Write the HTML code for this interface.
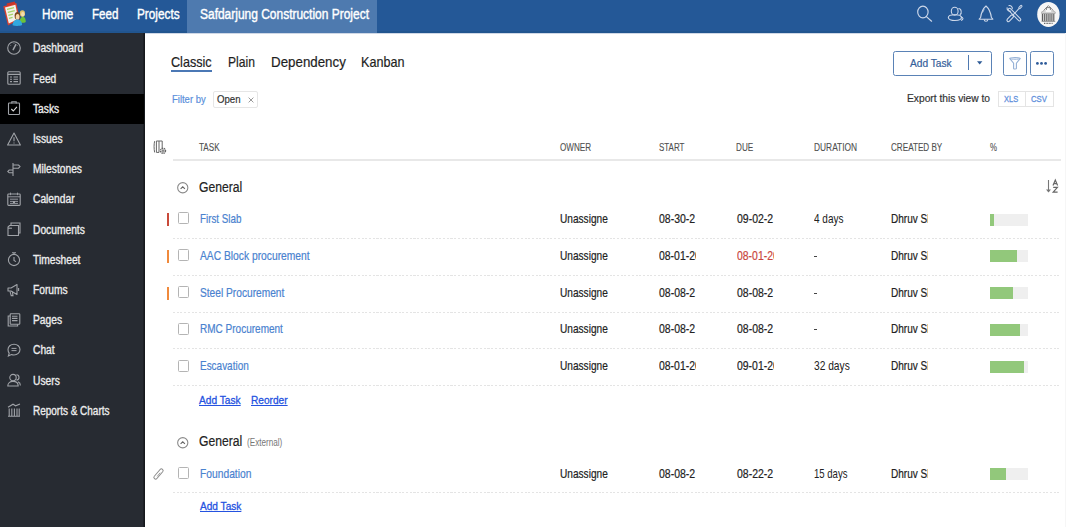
<!DOCTYPE html>
<html><head><meta charset="utf-8"><style>
html,body{margin:0;padding:0;width:1070px;height:527px;overflow:hidden;background:#fff;}
body{position:relative;font-family:"Liberation Sans",sans-serif;}
.t{position:absolute;white-space:nowrap;transform-origin:0 0;}
.c{position:absolute;}
svg.c{overflow:visible}
</style></head><body>
<div class="c" style="left:0px;top:0px;width:1066px;height:33px;background:#245897"></div>
<div class="c" style="left:0px;top:31px;width:1066px;height:2px;background:#21558f"></div>
<div class="c" style="left:187px;top:0px;width:190px;height:33px;background:#4e7aaf"></div>
<div class="c" style="left:145px;top:33px;width:921px;height:1px;background:#cfd8e6"></div>
<div class="t" style="left:41.60px;top:5px;font-size:14.0px;line-height:18px;color:#fff;transform:scaleX(0.8373);-webkit-text-stroke:0.4px #fff;">Home</div>
<div class="t" style="left:91.70px;top:5px;font-size:14.0px;line-height:18px;color:#fff;transform:scaleX(0.8271);-webkit-text-stroke:0.4px #fff;">Feed</div>
<div class="t" style="left:136.50px;top:5px;font-size:14.0px;line-height:18px;color:#fff;transform:scaleX(0.8429);-webkit-text-stroke:0.4px #fff;">Projects</div>
<div class="t" style="left:200.20px;top:5px;font-size:14.0px;line-height:18px;color:#fff;transform:scaleX(0.8549);-webkit-text-stroke:0.4px #fff;">Safdarjung Construction Project</div>
<svg class="c" style="left:0px;top:0px" width="32" height="32" viewBox="0 0 32 32">
<path d="M3.3 6.3L16.4 3l3.2 16.5L8 25.6z" fill="#d9402f"/>
<path d="M5 7.4L15.4 4.8l2.8 14.2L8.8 23.6z" fill="#f3f1ea"/>
<path d="M6.6 3.6l8.2-2 .6 2.4-8.2 2z" fill="#c8362a"/>
<path d="M7 9.4l7-1.8M7.8 12.4l7-1.8M8.4 15.4l4.6-1.2M9 18.4l3.6-1" stroke="#a6d46a" stroke-width="1.3"/>
<ellipse cx="22.4" cy="13.6" rx="2.6" ry="3.3" fill="#e4c36a"/>
<ellipse cx="22.8" cy="14.3" rx="1.7" ry="2.3" fill="#f4dcb0"/>
<path d="M19.6 22.6c0-3.2 1.4-5.8 3.4-5.8s2.8 2.4 2.8 5.2c-1.6.9-4.4 1.1-6.2.6z" fill="#6cc23a"/>
<ellipse cx="17.4" cy="15.8" rx="2.8" ry="3.9" fill="#7b4a1c"/>
<ellipse cx="17.6" cy="16.8" rx="1.9" ry="2.9" fill="#f6d5a8"/>
<path d="M12.6 25.2c0-3.4 2-5.8 4.9-5.8s4.6 2.4 4.6 5.6c-2.4 1.2-7 1.2-9.5.2z" fill="#32a8e0"/>
</svg>
<svg class="c" style="left:914px;top:3px" width="20" height="20" viewBox="0 0 20 20"><ellipse cx="8.9" cy="9" rx="5.2" ry="5.9" fill="none" stroke="#cdd8ea" stroke-width="1.15"/><path d="M12.4 13.6l5.2 4.6" stroke="#cdd8ea" stroke-width="1.2" stroke-linecap="round"/></svg>
<svg class="c" style="left:946px;top:4px" width="20" height="20" viewBox="0 0 20 20"><ellipse cx="8.7" cy="7.2" rx="3.4" ry="3.9" fill="none" stroke="#cdd8ea" stroke-width="1.1"/><ellipse cx="8.9" cy="13.6" rx="6.6" ry="2.9" fill="none" stroke="#cdd8ea" stroke-width="1.1"/><path d="M12.4 4.6a2.8 3.3 0 0 1 1.4 6.2M14.6 12.4c1.4.5 2.4 1.2 2.4 2.1 0 .8-.8 1.5-2 1.9" fill="none" stroke="#cdd8ea" stroke-width="1.05"/></svg>
<svg class="c" style="left:977px;top:4px" width="18" height="19" viewBox="0 0 18 19"><path d="M9 2C6 4.6 4.2 9.4 3.6 13.5L2.2 15.2h13.6l-1.4-1.7C13.8 9.4 12 4.6 9 2z" fill="none" stroke="#cdd8ea" stroke-width="1.15" stroke-linejoin="round"/><path d="M7.2 15.4a1.8 1.8 0 0 0 3.6 0" fill="none" stroke="#cdd8ea" stroke-width="1.1"/><path d="M7.3 5.2L5.6 8.6" stroke="#cdd8ea" stroke-width="1" opacity=".7"/></svg>
<svg class="c" style="left:1005px;top:4px" width="18" height="19" viewBox="0 0 18 19">
<path d="M4.6 5.6L14.4 15.6" stroke="#cdd8ea" stroke-width="3.6" stroke-linecap="round"/>
<path d="M4.6 5.6L14.4 15.6" stroke="#245897" stroke-width="1.5" stroke-linecap="round"/>
<path d="M2.2 3.4a2.9 2.9 0 0 0 3.8 3.6M3.6 1.6a2.9 2.9 0 0 1 3.6 3.6" fill="none" stroke="#cdd8ea" stroke-width="1.1"/>
<path d="M15.4 3.2L7.6 11.4" stroke="#cdd8ea" stroke-width="1.1"/>
<path d="M14.6 3.9l1.6-1.7" stroke="#cdd8ea" stroke-width="2.6" stroke-linecap="round"/>
<path d="M14.6 3.9l1.6-1.7" stroke="#245897" stroke-width=".8" stroke-linecap="round"/>
<path d="M7 12.4L3.4 16.2" stroke="#cdd8ea" stroke-width="4" stroke-linecap="round"/>
<path d="M7 12.4L3.4 16.2" stroke="#245897" stroke-width="1.8" stroke-linecap="round"/>
</svg>
<svg class="c" style="left:1036px;top:1px" width="25" height="27" viewBox="0 0 25 27"><ellipse cx="12.4" cy="13.4" rx="11.2" ry="12.5" fill="#f6f6f6"/>
<path d="M7.5 9.5L12.4 4.6l4.9 4.9" fill="none" stroke="#8a8a8a" stroke-width="1"/>
<path d="M10.4 9V6.6h4V9" fill="none" stroke="#777" stroke-width=".9"/>
<path d="M5.2 11.4c1.6-1.2 3-1.6 4.4-1.4M19.6 11.4c-1.6-1.2-3-1.6-4.4-1.4" fill="none" stroke="#999" stroke-width=".9"/>
<path d="M5.4 12.2h14" stroke="#777" stroke-width=".9"/>
<path d="M6.4 13v7M8.3 13v7M10.2 13v7M12.1 13v7M14 13v7M15.9 13v7M17.8 13v7" stroke="#555" stroke-width="1.1"/>
<path d="M5.6 20.4h13.6" stroke="#888" stroke-width=".9"/>
<path d="M8 22.4h8.6" stroke="#666" stroke-width="1.1" stroke-dasharray="1 .6"/>
</svg>
<div class="c" style="left:0px;top:33px;width:145px;height:494px;background:#272b32"></div>
<div class="c" style="left:143px;top:33px;width:2px;height:494px;background:linear-gradient(to right,#20232a,#131518)"></div>
<div class="c" style="left:0px;top:94px;width:144px;height:30px;background:#000"></div>
<div class="t" style="left:33.20px;top:40px;font-size:12.0px;line-height:16px;color:#ececec;transform:scaleX(0.8538);-webkit-text-stroke:0.35px #ececec;">Dashboard</div>
<div class="t" style="left:33.20px;top:71px;font-size:12.0px;line-height:16px;color:#ececec;transform:scaleX(0.8516);-webkit-text-stroke:0.35px #ececec;">Feed</div>
<div class="t" style="left:33.20px;top:101px;font-size:12.0px;line-height:16px;color:#ececec;transform:scaleX(0.8538);-webkit-text-stroke:0.35px #ececec;">Tasks</div>
<div class="t" style="left:33.20px;top:131px;font-size:12.0px;line-height:16px;color:#ececec;transform:scaleX(0.8538);-webkit-text-stroke:0.35px #ececec;">Issues</div>
<div class="t" style="left:33.20px;top:161px;font-size:12.0px;line-height:16px;color:#ececec;transform:scaleX(0.8538);-webkit-text-stroke:0.35px #ececec;">Milestones</div>
<div class="t" style="left:33.20px;top:191px;font-size:12.0px;line-height:16px;color:#ececec;transform:scaleX(0.8538);-webkit-text-stroke:0.35px #ececec;">Calendar</div>
<div class="t" style="left:33.20px;top:222px;font-size:12.0px;line-height:16px;color:#ececec;transform:scaleX(0.8538);-webkit-text-stroke:0.35px #ececec;">Documents</div>
<div class="t" style="left:33.20px;top:252px;font-size:12.0px;line-height:16px;color:#ececec;transform:scaleX(0.8538);-webkit-text-stroke:0.35px #ececec;">Timesheet</div>
<div class="t" style="left:33.20px;top:282px;font-size:12.0px;line-height:16px;color:#ececec;transform:scaleX(0.8538);-webkit-text-stroke:0.35px #ececec;">Forums</div>
<div class="t" style="left:33.20px;top:312px;font-size:12.0px;line-height:16px;color:#ececec;transform:scaleX(0.8538);-webkit-text-stroke:0.35px #ececec;">Pages</div>
<div class="t" style="left:33.20px;top:342px;font-size:12.0px;line-height:16px;color:#ececec;transform:scaleX(0.8538);-webkit-text-stroke:0.35px #ececec;">Chat</div>
<div class="t" style="left:33.20px;top:373px;font-size:12.0px;line-height:16px;color:#ececec;transform:scaleX(0.8538);-webkit-text-stroke:0.35px #ececec;">Users</div>
<div class="t" style="left:33.20px;top:403px;font-size:12.0px;line-height:16px;color:#ececec;transform:scaleX(0.8312);-webkit-text-stroke:0.35px #ececec;">Reports &amp; Charts</div>
<svg class="c" style="left:7px;top:41px" width="14" height="14" viewBox="0 0 14 14"><circle cx="7" cy="7" r="6.3" fill="none" stroke="#a0a3a8" stroke-width="1.1"/><path d="M6.2 8.6L8.8 3.6" stroke="#a0a3a8" stroke-width="1.5" stroke-linecap="round"/><path d="M3.4 4.2l.6.6M10.6 4.2l-.6.6M7 2v.8" stroke="#a0a3a8" stroke-width=".8"/></svg>
<svg class="c" style="left:7px;top:71px" width="14" height="14" viewBox="0 0 14 14"><rect x=".8" y=".8" width="12.4" height="12.4" rx="1" fill="none" stroke="#a0a3a8" stroke-width="1.1"/><path d="M.8 3.4h12.4M3 6h2M3 8.3h2M3 10.6h2M6.5 6h4.5M6.5 8.3h4.5M6.5 10.6h4.5" stroke="#a0a3a8" stroke-width="1.1"/></svg>
<svg class="c" style="left:7px;top:101px" width="14" height="14" viewBox="0 0 14 14"><rect x="1.5" y="2" width="11" height="11.5" rx=".8" fill="none" stroke="#a0a3a8" stroke-width="1.1"/><path d="M4.8 2.4V.8h4.4v1.6" fill="none" stroke="#a0a3a8" stroke-width="1.1"/><path d="M4.3 8l2 2 3.6-4.2" fill="none" stroke="#ddd" stroke-width="1.1"/></svg>
<svg class="c" style="left:7px;top:132px" width="14" height="14" viewBox="0 0 14 14"><path d="M7 1L13.4 13H.6z" fill="none" stroke="#a0a3a8" stroke-width="1.1" stroke-linejoin="round"/><path d="M7 5.2v4M7 10.6v1" stroke="#a0a3a8" stroke-width="1.1"/></svg>
<svg class="c" style="left:7px;top:162px" width="14" height="14" viewBox="0 0 14 14"><path d="M6 1v13M6 3h5.5l1.5 1.6-1.5 1.6H6M6 8H2.2L.8 9.4l1.4 1.4H6" fill="none" stroke="#a0a3a8" stroke-width="1.1"/></svg>
<svg class="c" style="left:7px;top:192px" width="14" height="14" viewBox="0 0 14 14"><rect x=".8" y="2" width="12.4" height="11.4" rx=".8" fill="none" stroke="#a0a3a8" stroke-width="1.1"/><path d="M.8 4.8h12.4M3.5 .6v2.6M10.5 .6v2.6M3 7.2h8M3 9.4h8M3 11.4h8" stroke="#a0a3a8" stroke-width=".9"/><rect x="6" y="9" width="2" height="2" fill="#a0a3a8"/></svg>
<svg class="c" style="left:7px;top:222px" width="14" height="14" viewBox="0 0 14 14"><path d="M2.5 3.5h9v10h-10.5v-8.5z" fill="none" stroke="#a0a3a8" stroke-width="1.1"/><path d="M4 3.3V1h9v10h-1.6" fill="none" stroke="#a0a3a8" stroke-width="1.1"/><path d="M1 6.2h4" stroke="#a0a3a8" stroke-width="1.1"/></svg>
<svg class="c" style="left:7px;top:252px" width="14" height="14" viewBox="0 0 14 14"><circle cx="7" cy="8" r="5.6" fill="none" stroke="#a0a3a8" stroke-width="1.1"/><path d="M5 .8h4M7 .8v1.6M7 5v3.4l2 1.2" fill="none" stroke="#a0a3a8" stroke-width="1.1"/></svg>
<svg class="c" style="left:7px;top:283px" width="14" height="14" viewBox="0 0 14 14"><path d="M1 5h3l6-3.5v10L4 8H1z" fill="none" stroke="#a0a3a8" stroke-width="1.1" stroke-linejoin="round"/><path d="M3 8.4l1.2 4.2h1.8L5.4 8.6M11.6 5v3" fill="none" stroke="#a0a3a8" stroke-width="1.1"/></svg>
<svg class="c" style="left:7px;top:313px" width="14" height="14" viewBox="0 0 14 14"><rect x="3.2" y=".8" width="9.6" height="10.4" rx=".8" fill="none" stroke="#a0a3a8" stroke-width="1.1"/><path d="M3.2 3H1.2v10h9.4v-1.8M5 3.2h5.5M5 5.4h5.5M5 7.6h5.5" fill="none" stroke="#a0a3a8" stroke-width="1.1"/></svg>
<svg class="c" style="left:7px;top:343px" width="14" height="14" viewBox="0 0 14 14"><path d="M7 1.2c3.4 0 6 2.4 6 5.4s-2.6 5.4-6 5.4c-.9 0-1.8-.2-2.6-.5L1.4 13l.8-2.8C1.4 9.3 1 8 1 6.6 1 3.6 3.6 1.2 7 1.2z" fill="none" stroke="#a0a3a8" stroke-width="1.1"/><path d="M4.5 5.4h5M4.5 7.6h5" stroke="#a0a3a8" stroke-width="1"/></svg>
<svg class="c" style="left:7px;top:373px" width="14" height="14" viewBox="0 0 14 14"><circle cx="6" cy="4.6" r="3.2" fill="none" stroke="#a0a3a8" stroke-width="1.1"/><path d="M.8 13c0-3 2.2-4.6 5.2-4.6s5.2 1.6 5.2 4.6z" fill="none" stroke="#a0a3a8" stroke-width="1.1"/><path d="M9.4 1.8a2.6 2.6 0 0 1 0 5.2M11 8.8c1.4.6 2.4 1.8 2.4 3.6" fill="none" stroke="#a0a3a8" stroke-width="1.1"/></svg>
<svg class="c" style="left:7px;top:403px" width="14" height="14" viewBox="0 0 14 14"><path d="M1 13.2h12M2.2 5.5v7.5M4.8 5.5v7.5M7.4 5.5v7.5M10 5.5v7.5M12.2 5.5v7.5M1 4.2l5-3 2.6 1.6L13 1" fill="none" stroke="#a0a3a8" stroke-width="1.1"/></svg>
<div class="c" style="left:1065px;top:33px;width:1px;height:494px;background:#f6f6f6"></div>
<div class="t" style="left:171.10px;top:52px;font-size:15.0px;line-height:20px;color:#1e1e1e;transform:scaleX(0.8406);-webkit-text-stroke:0.2px currentColor;">Classic</div>
<div class="t" style="left:227.80px;top:52px;font-size:15.0px;line-height:20px;color:#1e1e1e;transform:scaleX(0.8078);-webkit-text-stroke:0.2px currentColor;">Plain</div>
<div class="t" style="left:270.60px;top:52px;font-size:15.0px;line-height:20px;color:#1e1e1e;transform:scaleX(0.8889);-webkit-text-stroke:0.2px currentColor;">Dependency</div>
<div class="t" style="left:360.70px;top:52px;font-size:15.0px;line-height:20px;color:#1e1e1e;transform:scaleX(0.8406);-webkit-text-stroke:0.2px currentColor;">Kanban</div>
<div class="c" style="left:171px;top:69.5px;width:41px;height:2.5px;background:#4b78b5"></div>
<div class="t" style="left:172.00px;top:92px;font-size:10.5px;line-height:14px;color:#5a8fdb;transform:scaleX(0.9016);-webkit-text-stroke:0.2px currentColor;">Filter by</div>
<div class="c" style="left:213px;top:90.5px;width:44.5px;height:17.5px;box-sizing:border-box;border:1px solid #e6e6e6;border-radius:2px"></div>
<div class="t" style="left:217.30px;top:92px;font-size:11.25px;line-height:15px;color:#333;transform:scaleX(0.8562);-webkit-text-stroke:0.2px currentColor;">Open</div>
<svg class="c" style="left:248px;top:97px" width="6" height="6" viewBox="0 0 6 6"><path d="M.6 .6l4.8 4.8M5.4 .6L.6 5.4" stroke="#9a9a9a" stroke-width="1"/></svg>
<div class="c" style="left:893px;top:51px;width:99px;height:24.5px;box-sizing:border-box;border:1.5px solid #5a82b6;border-radius:2.5px"></div>
<div class="t" style="left:910.40px;top:56px;font-size:11.5px;line-height:15px;color:#34609a;transform:scaleX(0.8844);-webkit-text-stroke:0.2px currentColor;">Add Task</div>
<div class="c" style="left:967.6px;top:55.3px;width:1.5px;height:14.4px;background:#4f79b0"></div>
<svg class="c" style="left:976.5px;top:61px" width="6" height="4" viewBox="0 0 6 4"><path d="M0 .3h5.4L2.7 3.6z" fill="#2d5a96"/></svg>
<div class="c" style="left:1002.5px;top:51px;width:24.5px;height:24.5px;box-sizing:border-box;border:1.5px solid #5f86b8;border-radius:2.5px"></div>
<svg class="c" style="left:1009px;top:56.5px" width="12" height="13" viewBox="0 0 12 13"><path d="M.8 1.6c0-.6 2.3-1 5.2-1s5.2.4 5.2 1L7.4 6.2v5.4c0 .6-2.8.6-2.8 0V6.2z" fill="none" stroke="#94b0d6" stroke-width="1.1"/><path d="M.9 1.7c1 .8 9.2.8 10.2 0" fill="none" stroke="#94b0d6" stroke-width=".9"/></svg>
<div class="c" style="left:1030px;top:51px;width:24px;height:24.5px;box-sizing:border-box;border:1.5px solid #5f86b8;border-radius:2.5px"></div>
<svg class="c" style="left:1035.5px;top:61.8px" width="12" height="3" viewBox="0 0 12 3"><circle cx="1.4" cy="1.4" r="1.4" fill="#2e5b9a"/><circle cx="5.5" cy="1.4" r="1.4" fill="#2e5b9a"/><circle cx="9.6" cy="1.4" r="1.4" fill="#2e5b9a"/></svg>
<div class="t" style="left:906.70px;top:91px;font-size:11.0px;line-height:14px;color:#333;transform:scaleX(0.9304);-webkit-text-stroke:0.2px currentColor;">Export this view to</div>
<div class="c" style="left:997.5px;top:90.5px;width:56.5px;height:16.5px;box-sizing:border-box;border:1px solid #e4e4e4"></div>
<div class="c" style="left:1025px;top:91px;width:1px;height:15.5px;background:#e4e4e4"></div>
<div class="t" style="left:1004.30px;top:92px;font-size:9.75px;line-height:13px;color:#5f90dc;transform:scaleX(0.7652);-webkit-text-stroke:0.3px currentColor;">XLS</div>
<div class="t" style="left:1031.30px;top:92px;font-size:9.75px;line-height:13px;color:#5f90dc;transform:scaleX(0.7916);-webkit-text-stroke:0.3px currentColor;">CSV</div>
<svg class="c" style="left:153px;top:139.5px" width="13" height="14" viewBox="0 0 13 14"><path d="M1.6 1.2C.9 4.5.9 8.5 1.6 12.4M3.4 1v11.4M3.4 1h2.6v11.4H3.4M6 1h3.2v8" fill="none" stroke="#666" stroke-width="1"/><circle cx="10" cy="10.8" r="2.4" fill="none" stroke="#666" stroke-width="1.6" stroke-dasharray="1.2 .6"/><circle cx="10" cy="10.8" r="1.2" fill="#888"/></svg>
<div class="t" style="left:199.20px;top:140px;font-size:10.5px;line-height:14px;color:#505050;transform:scaleX(0.7762);-webkit-text-stroke:0.1px currentColor;">TASK</div>
<div class="t" style="left:559.70px;top:140px;font-size:10.5px;line-height:14px;color:#505050;transform:scaleX(0.7733);-webkit-text-stroke:0.1px currentColor;">OWNER</div>
<div class="t" style="left:658.60px;top:140px;font-size:10.5px;line-height:14px;color:#505050;transform:scaleX(0.7613);-webkit-text-stroke:0.1px currentColor;">START</div>
<div class="t" style="left:736.40px;top:140px;font-size:10.5px;line-height:14px;color:#505050;transform:scaleX(0.7763);-webkit-text-stroke:0.1px currentColor;">DUE</div>
<div class="t" style="left:813.90px;top:140px;font-size:10.5px;line-height:14px;color:#505050;transform:scaleX(0.7970);-webkit-text-stroke:0.1px currentColor;">DURATION</div>
<div class="t" style="left:891.30px;top:140px;font-size:10.5px;line-height:14px;color:#505050;transform:scaleX(0.7731);-webkit-text-stroke:0.1px currentColor;">CREATED BY</div>
<div class="t" style="left:989.80px;top:140px;font-size:10.5px;line-height:14px;color:#505050;transform:scaleX(0.7491);-webkit-text-stroke:0.1px currentColor;">%</div>
<div class="c" style="left:173px;top:158.5px;width:888px;height:2px;background:#e8e8e8"></div>
<svg class="c" style="left:177px;top:182px" width="11.5" height="11.5" viewBox="0 0 11.5 11.5"><circle cx="5.75" cy="5.75" r="5.1" fill="none" stroke="#8a8a8a" stroke-width="1.1"/><path d="M3.6 6.9l2.15-2.1 2.15 2.1" fill="none" stroke="#666" stroke-width="1.1"/></svg>
<div class="t" style="left:198.80px;top:178px;font-size:14.75px;line-height:19px;color:#222;transform:scaleX(0.8246);-webkit-text-stroke:0.2px currentColor;">General</div>
<svg class="c" style="left:1045px;top:179px" width="14" height="15" viewBox="0 0 14 15"><path d="M3.5 1v12" stroke="#777" stroke-width="1.1"/><path d="M1 10.4l2.5 3 2.5-3z" fill="#777"/><path d="M8 6.4l2.3-5.4 2.3 5.4M8.9 4.6h2.8" fill="none" stroke="#666" stroke-width="1.2"/><path d="M8.2 8.4h4.2L8.2 13.2h4.4" fill="none" stroke="#666" stroke-width="1.2"/></svg>
<div class="c" style="left:167px;top:213px;width:2px;height:13px;background:#c94a3a"></div>
<div class="c" style="left:177.5px;top:212px;width:11.5px;height:12px;box-sizing:border-box;border:1.3px solid #b4b4b4;border-radius:1.5px"></div>
<div class="t" style="left:199.60px;top:211px;font-size:12.25px;line-height:16px;color:#4a82cf;transform:scaleX(0.8009);-webkit-text-stroke:0.2px currentColor;">First Slab</div>
<div class="t" style="left:559.90px;top:211px;font-size:12.25px;line-height:16px;color:#222;transform:scaleX(0.8250);-webkit-text-stroke:0.2px currentColor;">Unassigne</div>
<div class="t" style="left:658.90px;top:211px;font-size:12.25px;line-height:16px;color:#222;transform:scaleX(0.8566);-webkit-text-stroke:0.2px currentColor;">08-30-2</div>
<div class="t" style="left:736.60px;top:211px;font-size:12.25px;line-height:16px;color:#222;transform:scaleX(0.8566);-webkit-text-stroke:0.2px currentColor;">09-02-2</div>
<div class="t" style="left:813.90px;top:211px;font-size:12.25px;line-height:16px;color:#222;transform:scaleX(0.8163);">4 days</div>
<div class="c" style="left:891.30px;top:211px;width:36.70px;height:16px;overflow:hidden"><div class="t" style="left:0;top:0;font-size:12.25px;line-height:16px;color:#222;transform:scaleX(1.0000);transform:scaleX(0.82);-webkit-text-stroke:0.2px currentColor;">Dhruv Sharma</div></div>
<div class="c" style="left:990px;top:214px;width:38px;height:11.6px;background:#efefef"></div>
<div class="c" style="left:990px;top:214px;width:3.8px;height:11.6px;background:#92c87b"></div>
<div class="c" style="left:173px;top:238px;width:888px;height:1px;background:repeating-linear-gradient(to right,#e4e4e4 0 2px,transparent 2px 3.7px)"></div>
<div class="c" style="left:167px;top:250px;width:2px;height:13px;background:#f08a3c"></div>
<div class="c" style="left:177.5px;top:249px;width:11.5px;height:12px;box-sizing:border-box;border:1.3px solid #b4b4b4;border-radius:1.5px"></div>
<div class="t" style="left:199.60px;top:248px;font-size:12.25px;line-height:16px;color:#4a82cf;transform:scaleX(0.8385);-webkit-text-stroke:0.2px currentColor;">AAC Block procurement</div>
<div class="t" style="left:559.90px;top:248px;font-size:12.25px;line-height:16px;color:#222;transform:scaleX(0.8250);-webkit-text-stroke:0.2px currentColor;">Unassigne</div>
<div class="c" style="left:658.90px;top:248px;width:37.20px;height:16px;overflow:hidden"><div class="t" style="left:0;top:0;font-size:12.25px;line-height:16px;color:#222;transform:scaleX(1.0000);transform:scaleX(0.8518);-webkit-text-stroke:0.2px currentColor;">08-01-20</div></div>
<div class="c" style="left:736.60px;top:248px;width:37.20px;height:16px;overflow:hidden"><div class="t" style="left:0;top:0;font-size:12.25px;line-height:16px;color:#c9463d;transform:scaleX(1.0000);transform:scaleX(0.8518);-webkit-text-stroke:0.2px currentColor;">08-01-20</div></div>
<div class="c" style="left:814px;top:256px;width:2.5px;height:1px;background:#444"></div>
<div class="c" style="left:891.30px;top:248px;width:36.70px;height:16px;overflow:hidden"><div class="t" style="left:0;top:0;font-size:12.25px;line-height:16px;color:#222;transform:scaleX(1.0000);transform:scaleX(0.82);-webkit-text-stroke:0.2px currentColor;">Dhruv Sharma</div></div>
<div class="c" style="left:990px;top:250px;width:38px;height:11.6px;background:#efefef"></div>
<div class="c" style="left:990px;top:250px;width:26.6px;height:11.6px;background:#92c87b"></div>
<div class="c" style="left:173px;top:275px;width:888px;height:1px;background:repeating-linear-gradient(to right,#e4e4e4 0 2px,transparent 2px 3.7px)"></div>
<div class="c" style="left:167px;top:287px;width:2px;height:13px;background:#f08a3c"></div>
<div class="c" style="left:177.5px;top:286px;width:11.5px;height:12px;box-sizing:border-box;border:1.3px solid #b4b4b4;border-radius:1.5px"></div>
<div class="t" style="left:199.60px;top:285px;font-size:12.25px;line-height:16px;color:#4a82cf;transform:scaleX(0.8311);-webkit-text-stroke:0.2px currentColor;">Steel Procurement</div>
<div class="t" style="left:559.90px;top:285px;font-size:12.25px;line-height:16px;color:#222;transform:scaleX(0.8250);-webkit-text-stroke:0.2px currentColor;">Unassigne</div>
<div class="t" style="left:658.90px;top:285px;font-size:12.25px;line-height:16px;color:#222;transform:scaleX(0.8566);-webkit-text-stroke:0.2px currentColor;">08-08-2</div>
<div class="t" style="left:736.60px;top:285px;font-size:12.25px;line-height:16px;color:#222;transform:scaleX(0.8566);-webkit-text-stroke:0.2px currentColor;">08-08-2</div>
<div class="c" style="left:814px;top:293px;width:2.5px;height:1px;background:#444"></div>
<div class="c" style="left:891.30px;top:285px;width:36.70px;height:16px;overflow:hidden"><div class="t" style="left:0;top:0;font-size:12.25px;line-height:16px;color:#222;transform:scaleX(1.0000);transform:scaleX(0.82);-webkit-text-stroke:0.2px currentColor;">Dhruv Sharma</div></div>
<div class="c" style="left:990px;top:287px;width:38px;height:11.6px;background:#efefef"></div>
<div class="c" style="left:990px;top:287px;width:22.8px;height:11.6px;background:#92c87b"></div>
<div class="c" style="left:173px;top:312px;width:888px;height:1px;background:repeating-linear-gradient(to right,#e4e4e4 0 2px,transparent 2px 3.7px)"></div>
<div class="c" style="left:177.5px;top:323px;width:11.5px;height:12px;box-sizing:border-box;border:1.3px solid #b4b4b4;border-radius:1.5px"></div>
<div class="t" style="left:199.60px;top:321px;font-size:12.25px;line-height:16px;color:#4a82cf;transform:scaleX(0.8173);-webkit-text-stroke:0.2px currentColor;">RMC Procurement</div>
<div class="t" style="left:559.90px;top:321px;font-size:12.25px;line-height:16px;color:#222;transform:scaleX(0.8250);-webkit-text-stroke:0.2px currentColor;">Unassigne</div>
<div class="t" style="left:658.90px;top:321px;font-size:12.25px;line-height:16px;color:#222;transform:scaleX(0.8566);-webkit-text-stroke:0.2px currentColor;">08-08-2</div>
<div class="t" style="left:736.60px;top:321px;font-size:12.25px;line-height:16px;color:#222;transform:scaleX(0.8566);-webkit-text-stroke:0.2px currentColor;">08-08-2</div>
<div class="c" style="left:814px;top:329px;width:2.5px;height:1px;background:#444"></div>
<div class="c" style="left:891.30px;top:321px;width:36.70px;height:16px;overflow:hidden"><div class="t" style="left:0;top:0;font-size:12.25px;line-height:16px;color:#222;transform:scaleX(1.0000);transform:scaleX(0.82);-webkit-text-stroke:0.2px currentColor;">Dhruv Sharma</div></div>
<div class="c" style="left:990px;top:324px;width:38px;height:11.6px;background:#efefef"></div>
<div class="c" style="left:990px;top:324px;width:30.4px;height:11.6px;background:#92c87b"></div>
<div class="c" style="left:173px;top:348px;width:888px;height:1px;background:repeating-linear-gradient(to right,#e4e4e4 0 2px,transparent 2px 3.7px)"></div>
<div class="c" style="left:177.5px;top:360px;width:11.5px;height:12px;box-sizing:border-box;border:1.3px solid #b4b4b4;border-radius:1.5px"></div>
<div class="t" style="left:199.60px;top:358px;font-size:12.25px;line-height:16px;color:#4a82cf;transform:scaleX(0.8130);-webkit-text-stroke:0.2px currentColor;">Escavation</div>
<div class="t" style="left:559.90px;top:358px;font-size:12.25px;line-height:16px;color:#222;transform:scaleX(0.8250);-webkit-text-stroke:0.2px currentColor;">Unassigne</div>
<div class="c" style="left:658.90px;top:358px;width:37.20px;height:16px;overflow:hidden"><div class="t" style="left:0;top:0;font-size:12.25px;line-height:16px;color:#222;transform:scaleX(1.0000);transform:scaleX(0.8518);-webkit-text-stroke:0.2px currentColor;">08-01-20</div></div>
<div class="c" style="left:736.60px;top:358px;width:37.20px;height:16px;overflow:hidden"><div class="t" style="left:0;top:0;font-size:12.25px;line-height:16px;color:#222;transform:scaleX(1.0000);transform:scaleX(0.8518);-webkit-text-stroke:0.2px currentColor;">09-01-20</div></div>
<div class="t" style="left:813.90px;top:358px;font-size:12.25px;line-height:16px;color:#222;transform:scaleX(0.8327);">32 days</div>
<div class="c" style="left:891.30px;top:358px;width:36.70px;height:16px;overflow:hidden"><div class="t" style="left:0;top:0;font-size:12.25px;line-height:16px;color:#222;transform:scaleX(1.0000);transform:scaleX(0.82);-webkit-text-stroke:0.2px currentColor;">Dhruv Sharma</div></div>
<div class="c" style="left:990px;top:361px;width:38px;height:11.6px;background:#efefef"></div>
<div class="c" style="left:990px;top:361px;width:34.2px;height:11.6px;background:#92c87b"></div>
<div class="c" style="left:173px;top:385px;width:888px;height:1px;background:repeating-linear-gradient(to right,#e4e4e4 0 2px,transparent 2px 3.7px)"></div>
<div class="t" style="left:199.30px;top:393px;font-size:11.5px;line-height:15px;color:#2452e0;transform:scaleX(0.8844);text-decoration:underline;-webkit-text-stroke:0.3px currentColor;">Add Task</div>
<div class="t" style="left:251.40px;top:393px;font-size:11.5px;line-height:15px;color:#2452e0;transform:scaleX(0.8816);text-decoration:underline;-webkit-text-stroke:0.3px currentColor;">Reorder</div>
<svg class="c" style="left:177px;top:437px" width="11.5" height="11.5" viewBox="0 0 11.5 11.5"><circle cx="5.75" cy="5.75" r="5.1" fill="none" stroke="#8a8a8a" stroke-width="1.1"/><path d="M3.6 6.9l2.15-2.1 2.15 2.1" fill="none" stroke="#666" stroke-width="1.1"/></svg>
<div class="t" style="left:198.80px;top:432px;font-size:14.75px;line-height:19px;color:#222;transform:scaleX(0.8246);-webkit-text-stroke:0.2px currentColor;">General</div>
<div class="t" style="left:246.50px;top:436px;font-size:10.0px;line-height:13px;color:#777;transform:scaleX(0.8152);">(External)</div>
<svg class="c" style="left:153px;top:468px" width="11" height="12" viewBox="0 0 11 12"><path d="M2.6 9.4L8.4 2.6" stroke="#8a8a8a" stroke-width="4.4" stroke-linecap="round"/><path d="M2.6 9.4L8.4 2.6" stroke="#fff" stroke-width="2.4" stroke-linecap="round"/><path d="M4.2 8.4l3-3.6" stroke="#9a9a9a" stroke-width="1"/></svg>
<div class="c" style="left:177.5px;top:467px;width:11.5px;height:12px;box-sizing:border-box;border:1.3px solid #b4b4b4;border-radius:1.5px"></div>
<div class="t" style="left:199.60px;top:466px;font-size:12.25px;line-height:16px;color:#4a82cf;transform:scaleX(0.8392);-webkit-text-stroke:0.2px currentColor;">Foundation</div>
<div class="t" style="left:559.90px;top:466px;font-size:12.25px;line-height:16px;color:#222;transform:scaleX(0.8250);-webkit-text-stroke:0.2px currentColor;">Unassigne</div>
<div class="t" style="left:658.90px;top:466px;font-size:12.25px;line-height:16px;color:#222;transform:scaleX(0.8566);-webkit-text-stroke:0.2px currentColor;">08-08-2</div>
<div class="t" style="left:736.60px;top:466px;font-size:12.25px;line-height:16px;color:#222;transform:scaleX(0.8566);-webkit-text-stroke:0.2px currentColor;">08-22-2</div>
<div class="t" style="left:813.90px;top:466px;font-size:12.25px;line-height:16px;color:#222;transform:scaleX(0.7790);">15 days</div>
<div class="c" style="left:891.30px;top:466px;width:36.70px;height:16px;overflow:hidden"><div class="t" style="left:0;top:0;font-size:12.25px;line-height:16px;color:#222;transform:scaleX(1.0000);transform:scaleX(0.82);-webkit-text-stroke:0.2px currentColor;">Dhruv Sharma</div></div>
<div class="c" style="left:990px;top:468px;width:38px;height:11.6px;background:#efefef"></div>
<div class="c" style="left:990px;top:468px;width:16.0px;height:11.6px;background:#92c87b"></div>
<div class="c" style="left:173px;top:492px;width:888px;height:1px;background:repeating-linear-gradient(to right,#e4e4e4 0 2px,transparent 2px 3.7px)"></div>
<div class="t" style="left:199.60px;top:499px;font-size:11.5px;line-height:15px;color:#2452e0;transform:scaleX(0.8780);text-decoration:underline;-webkit-text-stroke:0.3px currentColor;">Add Task</div>
</body></html>
